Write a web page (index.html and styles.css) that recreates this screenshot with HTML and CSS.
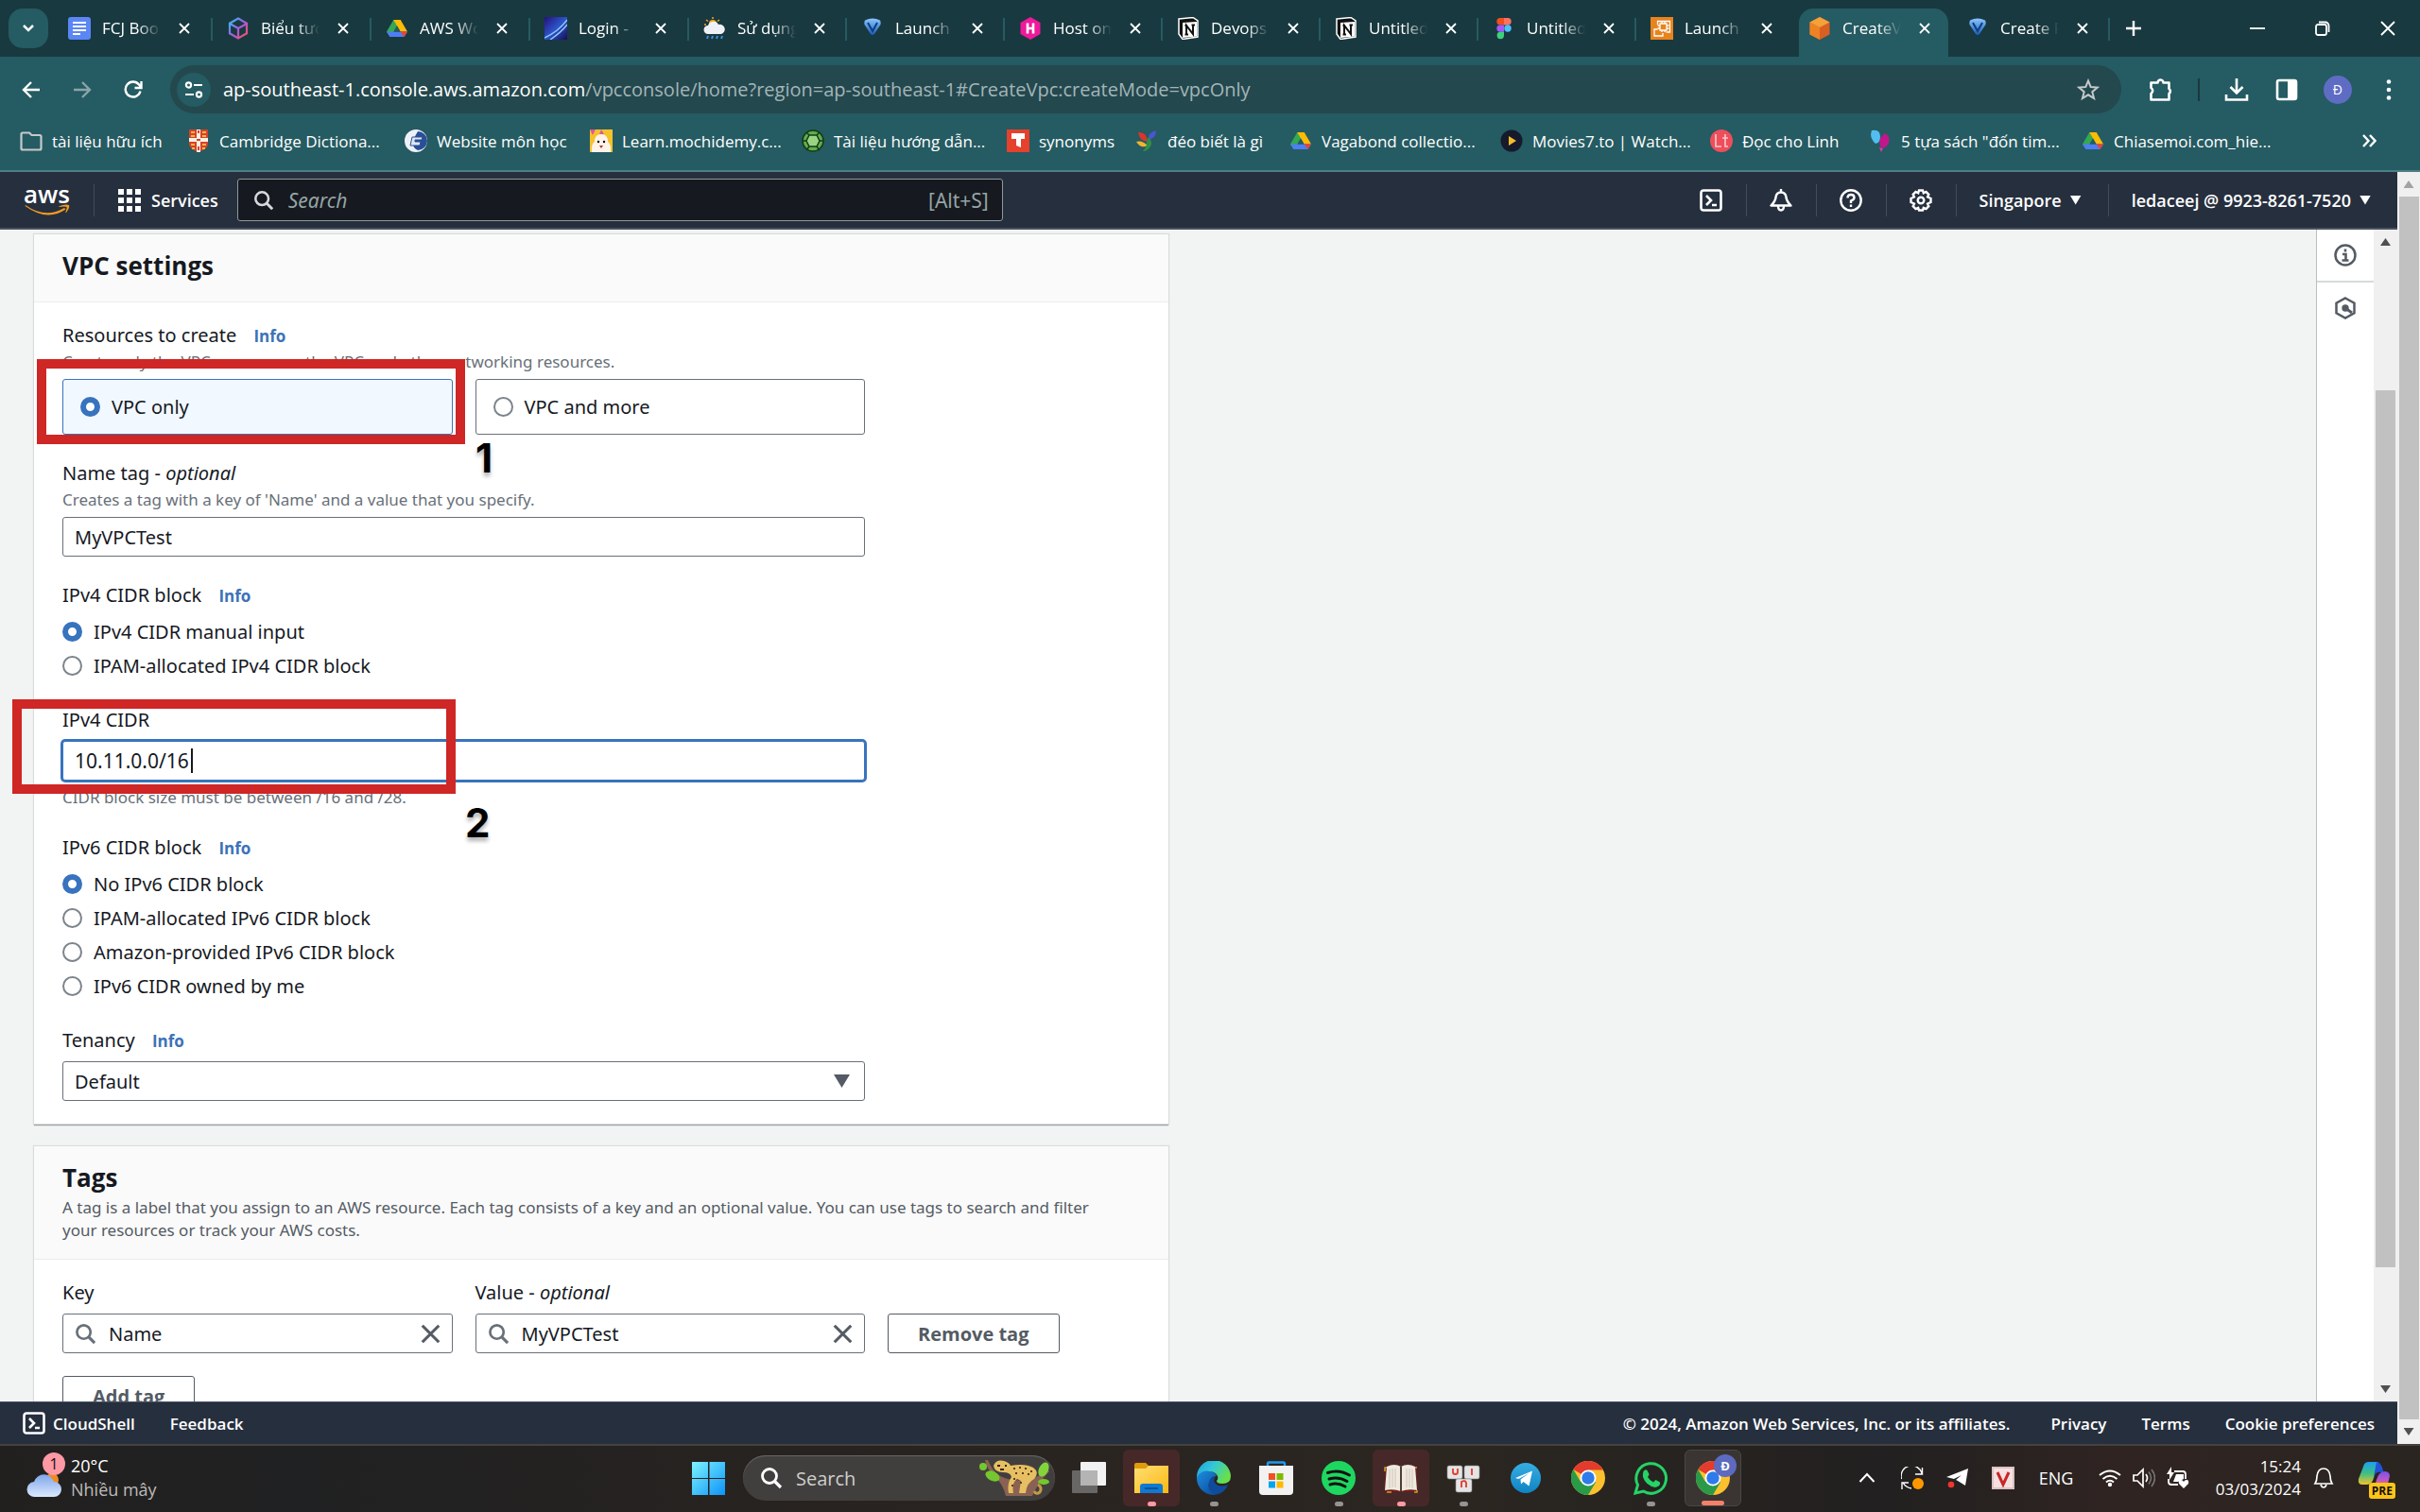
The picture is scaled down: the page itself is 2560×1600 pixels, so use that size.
FILE: index.html
```html
<!DOCTYPE html>
<html lang="en">
<head>
<meta charset="utf-8">
<title>CreateVpc | VPC Console</title>
<link rel="stylesheet" href="styles.css">
</head>
<body>
<svg class="defs" aria-hidden="true">
  <defs>
    <linearGradient id="g-hex" x1="0" y1="0" x2="1" y2="1"><stop offset="0" stop-color="#2fc3ee"/><stop offset=".5" stop-color="#a05be0"/><stop offset="1" stop-color="#ff4f5e"/></linearGradient>
    <linearGradient id="g-login" x1="0" y1="0" x2="1" y2="1"><stop offset="0" stop-color="#25107a"/><stop offset=".5" stop-color="#2c55c9"/><stop offset="1" stop-color="#160d55"/></linearGradient>
    <linearGradient id="g-v" x1="0" y1="0" x2="0" y2="1"><stop offset="0" stop-color="#8cc7ff"/><stop offset="1" stop-color="#1c5bb0"/></linearGradient>
    <linearGradient id="g-win" x1="0" y1="0" x2="1" y2="1"><stop offset="0" stop-color="#7df3ff"/><stop offset="1" stop-color="#0d93f7"/></linearGradient>
    <linearGradient id="g-cloud" x1="0" y1="0" x2="0" y2="1"><stop offset="0" stop-color="#7fa6ea"/><stop offset="1" stop-color="#dbe8ff"/></linearGradient>
    <linearGradient id="g-fold" x1="0" y1="0" x2="1" y2="1"><stop offset="0" stop-color="#ffdf74"/><stop offset="1" stop-color="#fcb813"/></linearGradient>
    <linearGradient id="g-edge" x1="0" y1="0" x2="1" y2=".5"><stop offset="0" stop-color="#1b9de2"/><stop offset=".5" stop-color="#35c8d6"/><stop offset="1" stop-color="#67e04a"/></linearGradient>
    <linearGradient id="g-edge2" x1="0" y1="0" x2="1" y2="1"><stop offset="0" stop-color="#1b8fe0"/><stop offset="1" stop-color="#0b3f8f"/></linearGradient>
    <linearGradient id="g-tg" x1="0" y1="0" x2="0" y2="1"><stop offset="0" stop-color="#37aee2"/><stop offset="1" stop-color="#0f83c4"/></linearGradient>
    <linearGradient id="g-co1" x1="0" y1="0" x2="0" y2="1"><stop offset="0" stop-color="#1aa0f5"/><stop offset=".5" stop-color="#3ebf83"/><stop offset="1" stop-color="#f5c12c"/></linearGradient>
    <linearGradient id="g-co2" x1="0" y1="0" x2="0" y2="1"><stop offset="0" stop-color="#7b4ff0"/><stop offset="1" stop-color="#f3659b"/></linearGradient>
  </defs>
  <symbol id="i-x" viewBox="0 0 12 12"><path d="M1 1l10 10M11 1L1 11" fill="none" stroke="currentColor" stroke-width="1.8"/></symbol>
  <symbol id="i-find" viewBox="0 0 24 24"><circle cx="10" cy="10" r="7.5" fill="none" stroke="currentColor" stroke-width="2.8"/><path d="M15 15l7 7" stroke="currentColor" stroke-width="3.2"/></symbol>
  <symbol id="i-drive" viewBox="0 0 24 24"><path d="M8.3 3h7.4L8 16.5 4.500 21 1 15.500z" fill="#34a853"/><path d="M8.300 3h7.400l7.300 12.500h-7.400z" fill="#fbbc04"/><path d="M5 15.500h18L19.500 21h-15L1 15.500z" fill="#4d7ef2"/><path d="M15.600 15.500H23L19.500 21z" fill="#ea4335"/><path d="M12 9.500l-3.500 6h7z" fill="#255b62"/></symbol>
  <symbol id="i-vee" viewBox="0 0 24 24"><path d="M4 3.500Q12-.500 20 3.500 21 5 20.500 8L14 18q-2 2-4 0L3.500 8Q3 5 4 3.500z" fill="url(#g-v)"/><path d="M7 6l5 9 5-9" fill="none" stroke="#0b3d86" stroke-width="2"/><path d="M8.500 20q3.500 2.500 7 0v2.500h-7z" fill="#123b52"/></symbol>
  <symbol id="i-notion" viewBox="0 0 24 24"><path d="M2 2l15-1.500L22 4v17L6 23.500 2 18z" fill="#111" stroke="#fff" stroke-width="1.500"/><path d="M6 6l15-1v15.500L6 22z" fill="#fff"/><path d="M10 18.500V9l7 9V8.500M8.500 9H11M15.500 8.500h3.500M8.500 18.500H12" fill="none" stroke="#111" stroke-width="2"/></symbol>
  <symbol id="i-shell" viewBox="0 0 24 24"><rect x="1.500" y="1.500" width="21" height="21" rx="2.500" fill="none" stroke="currentColor" stroke-width="2.600"/><path d="M7 7l5 5-5 5M13 17h5" fill="none" stroke="currentColor" stroke-width="2.600"/></symbol>
  <symbol id="i-chrome" viewBox="0 0 36 36"><circle cx="18" cy="18" r="18" fill="#fbc02d"/><path d="M18 18L2.400 9A18 18 0 0 1 33.600 9H18z" fill="#e33b2e"/><path d="M2.400 9A18 18 0 0 0 18 36l8-13.500L18 18l-8 4z" fill="#2a9a48"/><path d="M18 9H33.600" stroke="#e33b2e"/><circle cx="18" cy="18" r="8.500" fill="#fff"/><circle cx="18" cy="18" r="6.700" fill="#2f7bec"/></symbol>
</svg>

<div class="browser">
  <div class="tabstrip">
    <button class="tab-search" aria-label="Search tabs"><svg viewBox="0 0 14 14" width="14" height="14"><path d="M2 4l5 5 5-5" fill="none" stroke="currentColor" stroke-width="2.500"/></svg></button>
    <div class="tabs">
      <div class="tab"><svg class="fav" viewBox="0 0 24 24"><rect width="24" height="24" rx="3" fill="#5b86f5"/><path d="M5 6h14M5 10h14M5 14h14M5 18h8" stroke="#fff" stroke-width="2.200"/></svg><span>FCJ Boo</span><button aria-label="Close tab"><svg><use href="#i-x"/></svg></button></div>
      <div class="tab"><svg class="fav" viewBox="0 0 24 24"><path d="M12 1.500l9 5.200v10.600L12 22.500l-9-5.200V6.700zM3 7l9 5 9-5M12 12v10" fill="none" stroke="url(#g-hex)" stroke-width="2.200"/></svg><span>Biểu tượ</span><button aria-label="Close tab"><svg><use href="#i-x"/></svg></button></div>
      <div class="tab"><svg class="fav"><use href="#i-drive"/></svg><span>AWS Wo</span><button aria-label="Close tab"><svg><use href="#i-x"/></svg></button></div>
      <div class="tab"><svg class="fav" viewBox="0 0 24 24"><rect width="24" height="24" fill="url(#g-login)"/><path d="M0 22Q14 16 24 3M6 24Q18 16 24 8" fill="none" stroke="#8fc4ff" stroke-width="1.500"/></svg><span>Login - </span><button aria-label="Close tab"><svg><use href="#i-x"/></svg></button></div>
      <div class="tab"><svg class="fav" viewBox="0 0 24 24"><circle cx="10" cy="7" r="4" fill="#f9a825"/><path d="M10 0v2M3 3l2 1.500M17 3l-2 1.500M1 8h2" stroke="#f9a825" stroke-width="1.500"/><path d="M5 18a4.500 4.500 0 0 1 0-9 6 6 0 0 1 11-1 5 5 0 0 1 3 10z" fill="#eef1f5"/><path d="M5 20l-1 3M10 20l-1 3M15 20l-1 3M20 20l-1 3" stroke="#3d8fd8" stroke-width="2"/></svg><span>Sử dụng</span><button aria-label="Close tab"><svg><use href="#i-x"/></svg></button></div>
      <div class="tab"><svg class="fav"><use href="#i-vee"/></svg><span>Launch</span><button aria-label="Close tab"><svg><use href="#i-x"/></svg></button></div>
      <div class="tab"><svg class="fav" viewBox="0 0 24 24"><path d="M12 0l10.500 6v12L12 24 1.500 18V6z" fill="#ee1a9b"/><path d="M9 6.500v11M15 6.500v11M9 12h6" stroke="#fff" stroke-width="2.600"/></svg><span>Host on</span><button aria-label="Close tab"><svg><use href="#i-x"/></svg></button></div>
      <div class="tab"><svg class="fav"><use href="#i-notion"/></svg><span>Devops</span><button aria-label="Close tab"><svg><use href="#i-x"/></svg></button></div>
      <div class="tab"><svg class="fav"><use href="#i-notion"/></svg><span>Untitled</span><button aria-label="Close tab"><svg><use href="#i-x"/></svg></button></div>
      <div class="tab"><svg class="fav" viewBox="0 0 24 24"><path d="M12 1H8a3.700 3.700 0 0 0 0 7.400h4z" fill="#f24e1e"/><path d="M12 1h4a3.700 3.700 0 0 1 0 7.400h-4z" fill="#ff7262"/><path d="M12 8.400H8a3.700 3.700 0 0 0 0 7.400h4z" fill="#a259ff"/><circle cx="16" cy="12" r="3.700" fill="#4fc0fe"/><path d="M12 15.800H8a3.700 3.700 0 1 0 4 3.700z" fill="#3fd07a"/></svg><span>Untitled</span><button aria-label="Close tab"><svg><use href="#i-x"/></svg></button></div>
      <div class="tab before-active"><svg class="fav" viewBox="0 0 24 24"><rect width="24" height="24" fill="#e8831d"/><path d="M10 7h7v7h-7zM12 4.500V7M15 4.500V7M12 14v2M15 14v2M17 9h2.500M17 12h2.500M7.500 9H10M7.500 12H10M7.500 8V4.500h13V16h-4M7.500 13H4v7h9v-3" fill="none" stroke="#fff" stroke-width="1.300"/></svg><span>Launch</span><button aria-label="Close tab"><svg><use href="#i-x"/></svg></button></div>
      <div class="tab active"><svg class="fav" viewBox="0 0 24 24"><path d="M12 0l10.500 5.500v13L12 24 1.500 18.500v-13z" fill="#d95f22"/><path d="M12 0l10.500 5.500L12 11 1.500 5.500z" fill="#f5a13a"/><path d="M1.500 5.500L12 11v13L1.500 18.500z" fill="#ee8325"/></svg><span>CreateV</span><button aria-label="Close tab"><svg><use href="#i-x"/></svg></button></div>
      <div class="tab"><svg class="fav"><use href="#i-vee"/></svg><span>Create P</span><button aria-label="Close tab"><svg><use href="#i-x"/></svg></button></div>
      <button class="new-tab" aria-label="New tab"><svg viewBox="0 0 18 18" width="18" height="18"><path d="M9 1v16M1 9h16" stroke="currentColor" stroke-width="2.400"/></svg></button>
    </div>
    <div class="window-controls">
      <button aria-label="Minimize"><svg viewBox="0 0 16 16"><path d="M0 8h16" stroke="currentColor" stroke-width="1.800"/></svg></button>
      <button aria-label="Restore"><svg viewBox="0 0 16 16"><rect x="1" y="4" width="11" height="11" rx="2" fill="none" stroke="currentColor" stroke-width="1.800"/><path d="M4 1.500h7A3.500 3.500 0 0 1 14.500 5v7" fill="none" stroke="currentColor" stroke-width="1.800"/></svg></button>
      <button aria-label="Close window"><svg viewBox="0 0 16 16"><path d="M1 1l14 14M15 1L1 15" stroke="currentColor" stroke-width="1.800"/></svg></button>
    </div>
  </div>

  <div class="toolbar">
    <nav class="nav-buttons" aria-label="Navigation">
      <button aria-label="Back"><svg viewBox="0 0 20 20"><path d="M19 10H2M10 2l-8 8 8 8" fill="none" stroke="currentColor" stroke-width="2.400"/></svg></button>
      <button aria-label="Forward" disabled><svg viewBox="0 0 20 20"><path d="M1 10h17M10 2l8 8-8 8" fill="none" stroke="currentColor" stroke-width="2.400"/></svg></button>
      <button aria-label="Reload"><svg viewBox="0 0 20 20"><path d="M17.500 11.500A8 8 0 1 1 16 4.500L18 7M18.500 1v7h-7" fill="none" stroke="currentColor" stroke-width="2.400"/></svg></button>
    </nav>
    <div class="omnibox">
      <button class="site-info" aria-label="View site information"><svg viewBox="0 0 20 20" width="20" height="20"><circle cx="4.500" cy="5" r="2.600" fill="none" stroke="currentColor" stroke-width="2.200"/><path d="M10 5h9M1 15h9" stroke="currentColor" stroke-width="2.200"/><circle cx="15.500" cy="15" r="2.600" fill="none" stroke="currentColor" stroke-width="2.200"/></svg></button>
      <div class="url" role="textbox" aria-label="Address and search bar" tabindex="0"><b>ap-southeast-1.console.aws.amazon.com</b>/vpcconsole/home?region=ap-southeast-1#CreateVpc:createMode=vpcOnly</div>
      <button class="star" aria-label="Bookmark this tab"><svg viewBox="0 0 24 24" width="24" height="24"><path d="M12 2.500l2.700 6.600 7.100.500-5.500 4.600 1.800 6.900L12 17.300l-6.100 3.800 1.800-6.900L2.200 9.600l7.100-.500z" fill="none" stroke="currentColor" stroke-width="2"/></svg></button>
    </div>
    <div class="actions">
      <button aria-label="Extensions"><svg viewBox="0 0 26 26"><path d="M2.500 5.500h7a3 3 0 0 1 6 0h6v6.500a3 3 0 0 1 0 5v6.500h-19v-6.500a3.500 3.500 0 0 0 0-6z" fill="none" stroke="currentColor" stroke-width="2.600" stroke-linejoin="round"/></svg></button>
      <i class="rule"></i>
      <button aria-label="Downloads"><svg viewBox="0 0 26 26"><path d="M13 1v15M6.500 10l6.500 6.500L19.500 10M2 18v5.500h22V18" fill="none" stroke="currentColor" stroke-width="2.600"/></svg></button>
      <button aria-label="Side panel"><svg viewBox="0 0 26 26"><rect x="3" y="3" width="20" height="20" rx="2" fill="none" stroke="currentColor" stroke-width="2.600"/><path d="M14 3h8v20h-8z" fill="currentColor"/></svg></button>
      <button class="avatar" aria-label="Profile">Đ</button>
      <button aria-label="Menu"><svg viewBox="0 0 26 26"><circle cx="13" cy="4.500" r="2.300" fill="currentColor"/><circle cx="13" cy="13" r="2.300" fill="currentColor"/><circle cx="13" cy="21.500" r="2.300" fill="currentColor"/></svg></button>
    </div>
  </div>

  <nav class="bookmarks" aria-label="Bookmarks">
    <a href="#b1"><svg viewBox="0 0 24 24"><path d="M1.500 5V20q0 1.500 1.500 1.500h18q1.500 0 1.500-1.500V7.500Q22.500 6 21 6H12.500L10 3.500H3Q1.500 3.500 1.500 5z" fill="none" stroke="#c7c9cb" stroke-width="2.200"/></svg><span>tài liệu hữu ích</span></a>
    <a href="#b2"><svg viewBox="0 0 24 24"><path d="M2 0h20v15q0 6-10 9Q2 21 2 15z" fill="#d8412f"/><path d="M12 0v24M2 11h20" stroke="#f7f1e3" stroke-width="4"/><path d="M4 3h4M16 3h4M4 7h4M16 7h4M4 16h4M16 16h4M5 20h3M16 20h3" stroke="#f0b93c" stroke-width="2"/><path d="M12 1v3M12 18v4M10 11h4" stroke="#d8412f" stroke-width="2"/></svg><span>Cambridge Dictiona...</span></a>
    <a href="#b3"><svg viewBox="0 0 24 24"><circle cx="12" cy="12" r="12" fill="#eef1f7"/><path d="M14 2a10 10 0 0 1 0 20Q4 18 14 2z" fill="#2a4f97"/><path d="M8 8h11l-1 3h-7v2h6l-1 4H6z" fill="#dfe7f5" stroke="#2a4f97"/></svg><span>Website môn học</span></a>
    <a href="#b4"><svg viewBox="0 0 24 24"><rect width="24" height="24" fill="#f6c22c"/><path d="M2 24q-1-8 3-11 0-8 7-8t7 8q4 3 3 11z" fill="#fff3ea"/><path d="M0 0h6L3 6zM10 5l2-5 3 5z" fill="#e0559a"/><circle cx="9" cy="13" r="1.200"/><circle cx="15" cy="13" r="1.200"/><path d="M10 17h4l-2 3z" fill="#b5382a"/></svg><span>Learn.mochidemy.c...</span></a>
    <a href="#b5"><svg viewBox="0 0 24 24"><circle cx="12" cy="12" r="11" fill="#5cb04c" stroke="#173a17" stroke-width="1.500"/><path d="M8 6h8l3 6-3 6H8l-3-6z" fill="#9ad483" stroke="#173a17" stroke-width="1.500"/><path d="M8 6L5 3M16 6l3-3M19 12h4M16 18l3 4M8 18l-3 4M5 12H1" stroke="#173a17" stroke-width="1.500"/></svg><span>Tài liệu hướng dẫn...</span></a>
    <a href="#b6"><svg viewBox="0 0 24 24"><rect width="24" height="24" fill="#e5412c"/><path d="M5 4h14v6h-4v9l-5-2v-7H5z" fill="#fff"/></svg><span>synonyms</span></a>
    <a href="#b7"><svg viewBox="0 0 24 24"><path d="M3 3q9-1 10 10Q4 12 3 3z" fill="#d8352c"/><path d="M14 11Q13 3 22 1q0 8-8 10z" fill="#4b55cf"/><path d="M1 13q6-2 12 4-7 4-12-4z" fill="#f3b32d"/><path d="M14 8q5 6 2 10-3 5-8 5 5-5 4-11z" fill="#2f8f46"/></svg><span>đéo biết là gì</span></a>
    <a href="#b8"><svg><use href="#i-drive"/></svg><span>Vagabond collectio...</span></a>
    <a href="#b9"><svg viewBox="0 0 24 24"><circle cx="12" cy="12" r="11.500" fill="#151a2c"/><path d="M9 7l8 5-8 5z" fill="#f7bd2b"/></svg><span>Movies7.to | Watch...</span></a>
    <a href="#b10"><svg viewBox="0 0 24 24"><circle cx="12" cy="12" r="12" fill="#ee4e5b"/><path d="M6 5v13h6M16 5v13h3M13 9h6" fill="none" stroke="#f9c9cc" stroke-width="1.600"/></svg><span>Đọc cho Linh</span></a>
    <a href="#b11"><svg viewBox="0 0 24 24"><path d="M3 1q9-2 9 7 0 6-5 7Q0 9 3 1z" fill="#53bdf0"/><path d="M17 4q6 3 4 10-3 7-8 5-5-8 4-15z" fill="#c4168c"/><path d="M11 19l4 1-2 4z" fill="#e03ba8"/></svg><span>5 tựa sách "đốn tim...</span></a>
    <a href="#b12"><svg><use href="#i-drive"/></svg><span>Chiasemoi.com_hie...</span></a>
    <button aria-label="More bookmarks"><svg viewBox="0 0 16 16" width="16" height="16"><path d="M2 2l5.500 6L2 14M9 2l5.500 6L9 14" fill="none" stroke="currentColor" stroke-width="2.400"/></svg></button>
  </nav>
</div>

<div class="viewport">
  <div class="console">
    <header class="aws-bar">
      <a class="aws-logo" href="#home" aria-label="AWS home"><span>aws</span><svg viewBox="0 0 48 12" width="48" height="12"><path d="M1 1Q22 16 42 4l1.500 1.500Q24 19 .500 2z" fill="#f39a21"/><path d="M36 2.500Q43-.500 47 1q1 3-3 8-1 .500-.500-1 1.500-4 1-5-2-1-8 0z" fill="#f39a21"/></svg></a>
      <button class="services"><svg viewBox="0 0 24 24" width="24" height="24"><path d="M3 0v24M12 0v24M21 0v24" stroke="currentColor" stroke-width="6" stroke-dasharray="6 3"/></svg>Services</button>
      <label class="aws-search"><svg width="24" height="24"><use href="#i-find"/></svg><input type="search" placeholder="Search" aria-label="Search"><kbd>[Alt+S]</kbd></label>
      <div class="aws-right">
        <button class="ic" aria-label="CloudShell"><svg><use href="#i-shell"/></svg></button>
        <button class="ic" aria-label="Notifications"><svg viewBox="0 0 24 24"><path d="M1.500 17.500h21Q18 13 17.500 9 17 3.500 12 3.500T6.500 9Q6 13 1.500 17.500zM12 0v3M9 18q0 4.500 3 4.500t3-4.500" fill="none" stroke="currentColor" stroke-width="2.400" stroke-linejoin="round"/></svg></button>
        <button class="ic" aria-label="Support"><svg viewBox="0 0 24 24"><circle cx="12" cy="12" r="10.700" fill="none" stroke="currentColor" stroke-width="2.400"/><path d="M8.500 9.500Q8.500 6 12 6t3.500 3.200Q15.500 11 12 12.500V15M12 16.500V19" fill="none" stroke="currentColor" stroke-width="2.400"/></svg></button>
        <button class="ic" aria-label="Settings"><svg viewBox="0 0 24 24"><path d="M10 1.500h4l.800 2.800 2.700-1.300 2.800 2.800-1.200 2.700 3.400 1.500v4l-3.400 1.500 1.200 2.700-2.800 2.800-2.700-1.200-.800 2.700h-4l-.800-2.700-2.700 1.200-2.800-2.800 1.200-2.700L1.500 14v-4l3.400-1.500-1.200-2.700L6.500 3l2.700 1.300z" fill="none" stroke="currentColor" stroke-width="2.400"/><circle cx="12" cy="12" r="3.300" fill="none" stroke="currentColor" stroke-width="2.400"/></svg></button>
        <button class="menu">Singapore<i class="tri"></i></button>
        <button class="menu">ledaceej @ 9923-8261-7520<i class="tri"></i></button>
      </div>
    </header>

    <div class="middle">
      <main class="content">
        <form class="forms">
          <section class="card">
            <header><h2>VPC settings</h2></header>
            <div class="card-body">
              <fieldset class="field">
                <legend>Resources to create <a href="#info">Info</a></legend>
                <p>Create only the VPC resource or the VPC and other networking resources.</p>
                <div class="tiles">
                  <label class="tile chosen"><input type="radio" name="res" checked>VPC only</label>
                  <label class="tile"><input type="radio" name="res">VPC and more</label>
                  <div class="mark mark-1"></div>
                  <b class="step step-1">1</b>
                </div>
              </fieldset>
              <div class="field">
                <label for="nametag">Name tag - <em>optional</em></label>
                <p>Creates a tag with a key of 'Name' and a value that you specify.</p>
                <input class="text" id="nametag" type="text" value="MyVPCTest">
              </div>
              <fieldset class="field">
                <legend>IPv4 CIDR block <a href="#info">Info</a></legend>
                <div class="radios">
                  <label><input type="radio" name="v4" checked>IPv4 CIDR manual input</label>
                  <label><input type="radio" name="v4">IPAM-allocated IPv4 CIDR block</label>
                </div>
              </fieldset>
              <div class="field">
                <label for="cidr">IPv4 CIDR</label>
                <div class="anchor">
                  <input class="text focused" id="cidr" type="text" value="10.11.0.0/16">
                  <i class="caret"></i>
                  <div class="mark mark-2"></div>
                  <b class="step step-2">2</b>
                </div>
                <p class="hint">CIDR block size must be between /16 and /28.</p>
              </div>
              <fieldset class="field">
                <legend>IPv6 CIDR block <a href="#info">Info</a></legend>
                <div class="radios">
                  <label><input type="radio" name="v6" checked>No IPv6 CIDR block</label>
                  <label><input type="radio" name="v6">IPAM-allocated IPv6 CIDR block</label>
                  <label><input type="radio" name="v6">Amazon-provided IPv6 CIDR block</label>
                  <label><input type="radio" name="v6">IPv6 CIDR owned by me</label>
                </div>
              </fieldset>
              <div class="field">
                <div class="label-row"><label for="tenancy">Tenancy</label> <a href="#info">Info</a></div>
                <div class="anchor select"><select class="text" id="tenancy"><option>Default</option><option>Dedicated</option></select><i class="tri"></i></div>
              </div>
            </div>
          </section>

          <section class="card">
            <header><h2>Tags</h2><p>A tag is a label that you assign to an AWS resource. Each tag consists of a key and an optional value. You can use tags to search and filter your resources or track your AWS costs.</p></header>
            <div class="card-body">
              <div class="tag-row">
                <div class="field"><label for="key">Key</label>
                  <div class="text lookup"><svg class="find"><use href="#i-find"/></svg><input id="key" type="text" value="Name"><button type="button" aria-label="Clear key"><svg><use href="#i-x"/></svg></button></div></div>
                <div class="field"><label for="val">Value - <em>optional</em></label>
                  <div class="text lookup"><svg class="find"><use href="#i-find"/></svg><input id="val" type="text" value="MyVPCTest"><button type="button" aria-label="Clear value"><svg><use href="#i-x"/></svg></button></div></div>
                <button type="button" class="btn">Remove tag</button>
              </div>
              <button type="button" class="btn">Add tag</button>
            </div>
          </section>
        </form>
      </main>
      <aside class="tools">
        <button aria-label="Info panel"><svg viewBox="0 0 24 24"><circle cx="12" cy="12" r="10.500" fill="none" stroke="currentColor" stroke-width="2.500"/><path d="M12 5.500v3M9 11h3.500v6M8.500 17.500h7" fill="none" stroke="currentColor" stroke-width="2.600"/></svg></button>
        <button aria-label="Diagnose panel"><svg viewBox="0 0 24 24"><path d="M12 1.500l9.500 5.200v10.600L12 22.500l-9.500-5.200V6.700z" fill="none" stroke="currentColor" stroke-width="2.500"/><circle cx="12" cy="12" r="3.700" fill="currentColor"/><path d="M12 12l7 5" stroke="currentColor" stroke-width="3"/></svg></button>
      </aside>
      <div class="scroll inner" aria-hidden="true"><i class="up"></i><div class="track"><div class="thumb"></div></div><i class="down"></i></div>
    </div>

    <footer class="aws-foot">
      <button class="shell"><svg width="24" height="24"><use href="#i-shell"/></svg>CloudShell</button>
      <a href="#feedback">Feedback</a>
      <span class="copy">© 2024, Amazon Web Services, Inc. or its affiliates.</span>
      <a href="#privacy">Privacy</a><a href="#terms">Terms</a><a href="#cookies">Cookie preferences</a>
    </footer>
  </div>
  <div class="scroll outer" aria-hidden="true"><i class="up"></i><div class="track"><div class="thumb"></div></div><i class="down"></i></div>
</div>

<div class="taskbar">
  <button class="weather">
    <span class="weather-icon"><svg viewBox="0 0 38 30" width="38" height="30"><circle cx="27" cy="9" r="7" fill="#f08a24"/><path d="M9 27a8 8 0 0 1-1-16 11 11 0 0 1 21 0 8 8 0 0 1 0 16z" fill="url(#g-cloud)"/></svg><b>1</b></span>
    <span class="weather-text"><span>20°C</span><small>Nhiều mây</small></span>
  </button>
  <div class="apps">
    <button aria-label="Start"><svg viewBox="0 0 36 36"><path d="M0 1h17v17H0zM18.500 1H35v17H18.500zM0 19h17v17H0zM18.500 19H35v17H18.500z" fill="url(#g-win)"/></svg></button>
    <label class="task-search"><svg width="24" height="24"><use href="#i-find"/></svg><input type="search" placeholder="Search" aria-label="Search Windows"><svg class="cat" viewBox="0 0 76 38" width="76" height="38"><path d="M6 0q2 10 10 17 9 8 12 21h28q6-14 18-26l-2-3q-10 10-20 12-18 2-30-4Q14 12 9 0z" fill="#8a6253"/><circle cx="4" cy="7" r="4" fill="#74c72e"/><ellipse cx="14" cy="17" rx="8" ry="5" transform="rotate(25 14 17)" fill="#74c72e"/><ellipse cx="68" cy="10" rx="5" ry="8" transform="rotate(25 68 10)" fill="#82d63a"/><ellipse cx="68" cy="23" rx="6" ry="3" fill="#74c72e"/><path d="M15 6q3-7 11-5 6 2 7 5 15-3 24 2 7 5 1 12-8 4-9 15h-7l2-13-4-2q-6 4-4 15h-5q-2-10 3-17-1-5-9-5-9 0-10-7z" fill="#e6bf62"/><path d="M36 9h2M42 8h2M48 9h2M54 12h2M38 14h2M45 14h2M51 15h2M36 20h2M43 24h2M34 27h2" stroke="#5f3d1c" stroke-width="2"/><path d="M19 6h3M27 6h2M22 10h4" stroke="#3a2416" stroke-width="2"/><path d="M62 26q5 3 2 8-4 3-6-1" fill="none" stroke="#c59a46" stroke-width="3"/></svg></label>
    <button aria-label="Task view"><svg viewBox="0 0 36 36"><rect x="9" y="1" width="27" height="25" rx="1" fill="#f2f2f2"/><rect y="10" width="27" height="24" rx="1" fill="#737373" fill-opacity=".850"/><path d="M9 10h18v16H9z" fill="#b4b4b4"/></svg></button>
    <button class="hot dot" aria-label="File Explorer"><svg viewBox="0 0 36 36"><path d="M0 4q0-2 2-2h10l4 4v6H0z" fill="#e09b0a"/><path d="M0 8h12l3-3h21v29H0z" fill="url(#g-fold)"/><path d="M6 34V27q0-3 3-3h18q3 0 3 3v7z" fill="#1079d2"/><path d="M11 29h14" stroke="#07549c" stroke-width="2"/></svg></button>
    <button class="dot" aria-label="Edge"><svg viewBox="0 0 36 36"><path d="M0 18A18 18 0 0 1 36 16q0 8-9 8-6 0-6-3 2-2 1-5-3-6-10-4-8 2-12 6z" fill="url(#g-edge)"/><path d="M0 17Q5 9 14 11q6 1 7 5-9 1-6 9 4 8 13 7-5 4-11 4A18 18 0 0 1 0 17z" fill="url(#g-edge2)"/><path d="M20 16q-4 5 1 9 5 3 12 0-3 8-11 10-9-1-10-9 1-8 8-10z" fill="#0f4b9a"/></svg></button>
    <button aria-label="Microsoft Store"><svg viewBox="0 0 36 36"><path d="M9 7V3q0-1.500 1.500-1.500h15Q27 1.500 27 3v4" fill="none" stroke="#1d9bf0" stroke-width="2.400"/><path d="M0 5h36v27q0 4-4 4H4q-4 0-4-4z" fill="#f2f2f2"/><path d="M10 13h7v7h-7z" fill="#f25022"/><path d="M18.500 13h7v7h-7z" fill="#7fba00"/><path d="M10 21.500h7v7h-7z" fill="#00a4ef"/><path d="M18.500 21.500h7v7h-7z" fill="#ffb900"/></svg></button>
    <button class="dot" aria-label="Spotify"><svg viewBox="0 0 36 36"><circle cx="18" cy="18" r="18" fill="#1ed760"/><path d="M6.500 12.500q12-4 23 2.500M8 19q10-3 19 2.500M9 25q8-2.500 16 2" fill="none" stroke="#111" stroke-width="3" stroke-linecap="round"/></svg></button>
    <button class="hot dot" aria-label="Reader"><svg viewBox="0 0 36 36"><path d="M1 7h34v26H1z" fill="#6a1f18" stroke="#d99a2c" stroke-width="1.500" stroke-dasharray="5 24"/><path d="M3 6q8-4 15 0 7-4 15 0l2 25q-9-2-17 1-8-3-17-1z" fill="#efe9df"/><path d="M18 6v26" stroke="#4a4038" stroke-width="2"/><path d="M6 9v20M9 8v20M12 8v20M24 8v20M27 8v20M30 9v20" stroke="#cfc6ba"/></svg></button>
    <button class="dot" aria-label="UniKey"><svg viewBox="0 0 36 36"><g fill="#e4e4e4" stroke="#8b8b8b" stroke-width=".600"><rect x="1" y="5" width="16" height="14" rx="2"/><rect x="19" y="5" width="16" height="14" rx="2"/><rect x="10" y="19" width="17" height="14" rx="2"/></g><path d="M7 8v4q0 2 2.500 2T12 12V8M27 8v7M16 28v-6q4-2 5 1v5" fill="none" stroke="#e23a2e" stroke-width="1.800"/></svg></button>
    <button aria-label="Telegram"><svg viewBox="0 0 36 36"><circle cx="18" cy="18" r="16" fill="url(#g-tg)"/><path d="M7 18L25 10.500l-3.500 16-6-4.500-2.500 2.500-.500-5 9-6.500-11 6z" fill="#fff"/></svg></button>
    <button aria-label="Chrome"><svg><use href="#i-chrome"/></svg></button>
    <button class="dot" aria-label="WhatsApp"><svg viewBox="0 0 36 36"><path d="M2 34l2.500-8.500A15.800 15.800 0 1 1 10.500 32z" fill="none" stroke="#25d366" stroke-width="3"/><path d="M10.500 11q2-3 4-1l2 4q0 1-1.500 3 2.500 4 6 5.500l2.500-2.500 4.500 2.500q1 4-5 5.500Q13 26 10 17q-.500-3 .500-6z" fill="#25d366"/></svg></button>
    <button class="current dot" aria-label="Chrome, profile"><svg><use href="#i-chrome"/></svg><b>Đ</b></button>
  </div>
  <div class="tray">
    <button aria-label="Hidden icons"><svg viewBox="0 0 24 24"><path d="M4.500 16L12 8l7.500 8" fill="none" stroke="currentColor" stroke-width="2"/></svg></button>
    <button aria-label="Update"><svg viewBox="0 0 24 24"><path d="M.500 13A11 11 0 0 1 22 7M22.500 1v7H15M11 23Q5 22 2 17M1 24v-7h7" fill="none" stroke="currentColor" stroke-width="1.400"/><circle cx="18" cy="18" r="6" fill="#ff9800"/></svg></button>
    <button aria-label="Telegram"><svg viewBox="0 0 24 24"><path d="M0 11L23 2l-3 18-8-5-2-1 6-5-8 4z" fill="#fff"/><circle cx="5" cy="19" r="3.300" fill="#f0372e"/></svg></button>
    <button aria-label="UniKey"><svg viewBox="0 0 24 24"><rect width="24" height="24" fill="#d9c3c3"/><rect x="2" y="2" width="20" height="20" fill="#f7e0e0"/><path d="M6 6l6 13 6-13" fill="none" stroke="#c62828" stroke-width="3"/></svg></button>
    <button class="lang">ENG</button>
    <button class="status" aria-label="Network, sound, battery">
      <svg viewBox="0 0 24 24"><path d="M1 9q11-9 22 0M4.500 13q7.500-6.500 15 0M8 16.500q4-3.500 8 0" fill="none" stroke="currentColor" stroke-width="2"/><circle cx="12" cy="19" r="2.200" fill="currentColor"/></svg>
      <svg viewBox="0 0 24 24"><path d="M1 9h4l6-6v18l-6-6H1zM14 8q3 4 0 8" fill="none" stroke="currentColor" stroke-width="1.700"/><path d="M17 5.500q5 6.500 0 13M20 3q7 9 0 18" fill="none" stroke="#777" stroke-width="1.500"/></svg>
      <svg viewBox="0 0 24 24"><path d="M8 5h9q3 0 3 3v5M2 13v3q0 3 3 3h7" fill="none" stroke="currentColor" stroke-width="1.800"/><path d="M5 0L0 8h3v6l5-8H5zM7 16l3-8h8v5l-6 3z" fill="currentColor"/><path d="M18 23l-5-5q-1-4 2-4 2 0 3 2 1-2 3-2 3 0 2 4z" fill="currentColor"/></svg>
    </button>
    <button class="clock"><span>15:24</span><span>03/03/2024</span></button>
    <button aria-label="Notifications"><svg viewBox="0 0 24 24"><path d="M3 18q2-3 2-8 1-8 7-8t7 8q0 5 2 8zM9 19q1 3 3 3t3-3" fill="none" stroke="currentColor" stroke-width="1.700"/></svg></button>
    <button class="copilot" aria-label="Copilot"><svg viewBox="0 0 36 36"><path d="M6 6q1-5 6-5h10l-5 17q-2 7-7 7H5q-5 0-4-6z" fill="url(#g-co1)"/><path d="M20 1q4 0 6 6l2 6q-8-4-11 4z" fill="#2153d8"/><path d="M28 11q6 0 6 5l-3 12H16q2-1 4-8 2-8 8-9z" fill="url(#g-co2)"/></svg><b>PRE</b></button>
  </div>
</div>
</body>
</html>
```
FILE: styles.css
```css
* { box-sizing: border-box; }

html, body { height: 100%; }

body {
  margin: 0;
  display: flex;
  flex-direction: column;
  overflow: hidden;
  font-family: "Open Sans", "Noto Sans", sans-serif;
  font-size: 20px;
  color: #16191f;
}

button, input, select {
  font: inherit;
  color: inherit;
  margin: 0;
  padding: 0;
  border: 0;
  background: none;
  outline: 0;
}

button {
  display: inline-flex;
  align-items: center;
  justify-content: center;
}

svg { display: block; flex: none; }
a { color: inherit; text-decoration: none; }
i { flex: none; }
.defs { position: absolute; width: 0; height: 0; }

/* Browser frame */
.browser {
  flex: none;
  color: #fff;
  background: #255b62;
  border-bottom: 2px solid #4d7f84;
  font-size: 17px;
}

.tabstrip {
  display: flex;
  height: 60px;
  background: #18393f;
}

.tab-search {
  width: 42px;
  height: 42px;
  margin: 9px 6px 0 9px;
  border-radius: 15px;
  background: #255b62;
}

.tabs { display: flex; flex: 1; }

.tab {
  position: relative;
  display: flex;
  align-items: center;
  width: 167px;
  padding: 0 0 0 15px;
}

.tab:nth-child(-n + 4) { width: 168px; }

.tab::after {
  content: "";
  position: absolute;
  right: 0;
  top: 19px;
  width: 2px;
  height: 24px;
  background: #255b62;
}

.tab.active::after, .before-active::after { display: none; }

.tab.active::before {
  content: "";
  position: absolute;
  z-index: 0;
  left: 5px;
  right: 4px;
  top: 9px;
  bottom: 0;
  border-radius: 15px 15px 0 0;
  background: #255b62;
}

.tab > * { position: relative; }
.fav { width: 24px; height: 24px; margin-right: 12px; }

.tab span {
  width: 62px;
  overflow: hidden;
  white-space: nowrap;
  line-height: 26px;
  -webkit-mask-image: linear-gradient(90deg, #000 60%, transparent);
  mask-image: linear-gradient(90deg, #000 60%, transparent);
}

.tab button { width: 24px; height: 24px; margin-left: 13px; }
.tab button svg { width: 12px; height: 12px; }
.new-tab { width: 50px; }

.window-controls { display: flex; }
.window-controls button { width: 69px; }
.window-controls svg { width: 16px; height: 16px; }

.toolbar {
  display: flex;
  align-items: center;
  height: 69px;
}

.nav-buttons { display: flex; width: 180px; padding-left: 6px; }
.nav-buttons button { width: 54px; }
.nav-buttons svg { width: 20px; height: 20px; }
.nav-buttons button:disabled { color: #8aa4a8; }

.omnibox {
  flex: 1;
  display: flex;
  align-items: center;
  height: 51px;
  padding: 0 23px 0 7px;
  border-radius: 26px;
  background: #23484e;
}

.site-info {
  width: 36px;
  height: 36px;
  margin-right: 13px;
  border-radius: 18px;
  background: #255b62;
}

.url { flex: 1; font-size: 20px; color: #a3b5b8; white-space: nowrap; }
.url b { font-weight: 400; color: #fff; }
.star { color: #c3c9ca; }

.actions {
  display: flex;
  align-items: center;
  justify-content: space-between;
  width: 316px;
  padding: 0 20px 0 29px;
}

.actions svg { width: 26px; height: 26px; }
.rule { width: 2px; height: 24px; background: #18393f; }

.avatar {
  width: 30px;
  height: 30px;
  border-radius: 50%;
  background: #5f6cc4;
  font-size: 14px;
}

.bookmarks {
  display: grid;
  grid-template-columns: 177px 230px 196px 224px 217px 136px 163px 223px 222px 168px 225px 1fr 60px;
  height: 51px;
  padding: 0 24px 11px 21px;
  align-items: center;
}

.bookmarks a { display: flex; align-items: center; gap: 10px; white-space: nowrap; }
.bookmarks svg { width: 24px; height: 24px; }
.bookmarks button svg { width: 16px; height: 16px; }

/* Console */
.viewport { flex: 1; display: flex; min-height: 0; }

.console {
  flex: 1;
  min-width: 0;
  display: flex;
  flex-direction: column;
}

.aws-bar {
  flex: none;
  display: flex;
  align-items: center;
  height: 61px;
  color: #fff;
  background: #262f3e;
  border-bottom: 2px solid #4b5362;
  font-size: 18px;
  font-weight: 600;
}

.aws-logo {
  display: flex;
  flex-direction: column;
  align-items: center;
  width: 99px;
}

.aws-logo span { font-size: 26px; line-height: 20px; font-weight: 600; }
.aws-logo svg { margin-top: 1px; }

.services {
  gap: 11px;
  height: 34px;
  padding: 0 20px 0 25px;
  border-left: 1px solid #414d5c;
}

.aws-search {
  display: flex;
  align-items: center;
  width: 810px;
  height: 45px;
  padding: 0 14px 0 16px;
  border: 1px solid #8d9a9b;
  border-radius: 3px;
  background: #16191f;
  font-family: "Noto Sans", sans-serif;
  font-size: 21px;
  font-weight: 400;
  color: #d5dbdb;
}

.aws-search svg { width: 22px; height: 22px; margin-right: 15px; }
.aws-search input { flex: 1; }
.aws-search input::placeholder { color: #95a5a6; opacity: 1; font-style: italic; }
.aws-search kbd { font: inherit; color: #95a5a6; }

.aws-right { display: flex; align-items: center; margin-left: auto; }
.aws-right button { height: 34px; border-left: 1px solid #414d5c; }
.aws-right .ic { width: 74px; }
.aws-right .ic:first-child { border-left: 0; }
.aws-right .ic svg { width: 24px; height: 24px; }
.aws-right .menu { padding: 0 28px 0 24px; gap: 9px; }

.tri {
  width: 12px;
  height: 10px;
  background: currentColor;
  clip-path: polygon(0 0, 100% 0, 50% 100%);
}

.middle { flex: 1; display: flex; min-height: 0; }

.content {
  flex: 1;
  min-width: 0;
  padding: 5px 36px 0;
  overflow: hidden;
  background: #f2f3f3;
}

.forms { display: grid; gap: 24px; max-width: 1200px; font-family: "Noto Sans", sans-serif; }

.card {
  background: #fff;
  box-shadow: 0 0 1px 1px #d8dcdd, 0 2px 1px #8f9999;
}

.card > header {
  padding: 17px 48px 18px 30px;
  background: #fafafa;
  border-bottom: 1px solid #eaeded;
}

h2 { margin: 0 0 3px; font-family: "Open Sans", sans-serif; font-size: 26px; line-height: 33px; font-weight: 700; }
p { margin: 0; font-size: 17px; line-height: 24px; color: #687078; }
.card > header p { color: #545b64; }

.card-body { display: grid; gap: 24px; padding: 18px 30px 24px; }

.field { border: 0; margin: 0; padding: 0; min-width: 0; line-height: 33px; }
.card-body > .field { width: calc(75% - 6px); }
.field > label { display: block; height: 33px; }
legend, .label-row { height: 33px; padding: 0; }

.field a {
  margin-left: 13px;
  font-family: "Open Sans", sans-serif;
  font-size: 17px;
  line-height: 20px;
  font-weight: 700;
  color: #3d72b8;
}

.hint { margin-top: 6px; }

.tiles {
  position: relative;
  display: grid;
  grid-template-columns: 1fr 1fr;
  gap: 24px;
  margin-top: 6px;
}

.tile {
  display: flex;
  align-items: center;
  height: 59px;
  padding-left: 18px;
  border: 1px solid #687078;
  border-radius: 3px;
}

.tile.chosen { border-color: #3873bd; background: #f1f8ff; }

input[type="radio"] {
  appearance: none;
  flex: none;
  width: 21px;
  height: 21px;
  margin-right: 12px;
  border: 2px solid #7d848b;
  border-radius: 50%;
  background: #fff;
}

input[type="radio"]:checked { border: 6px solid #3873bd; }

.radios { display: grid; gap: 3px; margin-top: 6px; }
.radios label { display: flex; align-items: center; }

.text {
  display: block;
  width: 100%;
  height: 42px;
  margin-top: 6px;
  padding: 0 12px;
  border: 1px solid #687078;
  border-radius: 3px;
  background: #fff;
}

.text.focused { border-color: #3873bd; box-shadow: 0 0 0 2px #3873bd; font-size: 21px; }
.anchor { position: relative; }
select { appearance: none; }

.select .tri {
  position: absolute;
  right: 16px;
  top: 14px;
  width: 17px;
  height: 14px;
  color: #545b64;
}

.caret {
  position: absolute;
  left: 136px;
  top: 8px;
  width: 2px;
  height: 26px;
  background: #16191f;
}

/* Walk-through highlights drawn over the form */
.mark { position: absolute; border: 10px solid #cf2626; }
.mark-1 { left: -27px; top: -21px; width: 453px; height: 90px; }
.mark-2 { left: -53px; top: -44px; width: 469px; height: 100px; }

.step {
  position: absolute;
  font: 700 42px/43px Inter, sans-serif;
  color: #000;
  text-shadow: 0 4px 4px rgba(0, 0, 0, .3);
}

.step-1 { left: 437px; top: 62px; }
.step-2 { left: 426px; top: 65px; }

.tag-row {
  display: grid;
  grid-template-columns: calc(37.5% - 15px) calc(37.5% - 15px) auto;
  gap: 24px;
  align-items: end;
  justify-content: start;
}

.lookup { display: flex; align-items: center; }
.lookup input { flex: 1; min-width: 0; }
.lookup .find { width: 23px; height: 23px; margin-right: 13px; color: #687078; }
.lookup button svg { width: 21px; height: 21px; color: #545b64; }

.btn {
  justify-self: start;
  height: 42px;
  padding: 0 31px;
  border: 1px solid #545b64;
  border-radius: 3px;
  background: #fff;
  font-family: "Open Sans", sans-serif;
  font-weight: 700;
  color: #545b64;
}

.tools {
  flex: none;
  width: 61px;
  border-left: 1px solid #b9bfc0;
  background: #fff;
  color: #545b64;
}

.tools button { width: 100%; height: 56px; border-bottom: 2px solid #d5dbdb; }
.tools button + button { height: 54px; border-bottom: 0; }
.tools svg { width: 24px; height: 24px; }

.scroll {
  flex: none;
  display: flex;
  flex-direction: column;
  align-items: center;
  width: 25px;
  background: #f0f0f0;
}

.outer { width: 24px; }
.scroll i { width: 11px; height: 8px; margin: 9px 0; background: #505050; }
.scroll .up { clip-path: polygon(50% 0, 100% 100%, 0 100%); }
.scroll .down { clip-path: polygon(0 0, 100% 0, 50% 100%); }
.outer .up { background: #a3a3a3; }
.track { flex: 1; width: 21px; }
.thumb { height: 100%; background: #c1c1c1; }
.inner .track { padding: 144px 0 116px; }

.aws-foot {
  flex: none;
  display: flex;
  align-items: center;
  gap: 37px;
  height: 45px;
  padding: 0 24px;
  color: #fff;
  background: #262f3e;
  border-top: 1px solid #4b5362;
  font-size: 17px;
  font-weight: 600;
}

.shell { gap: 8px; }
.copy { margin-left: auto; margin-right: 6px; }

/* Taskbar */
.taskbar {
  flex: none;
  display: grid;
  grid-template-columns: 1fr auto 1fr;
  height: 72px;
  padding-bottom: 2px;
  border-top: 2px solid #45423f;
  background: linear-gradient(90deg, #22201f, #202122 12%, #282320 35%, #2b2620 60%, #222020 78%, #302422 88%, #2a2520);
  color: #fff;
  font-size: 18px;
}

.weather { justify-self: start; padding-left: 28px; gap: 9px; }
.weather-icon { position: relative; padding-top: 16px; }

.weather-icon b {
  position: absolute;
  right: -3px;
  top: -4px;
  width: 24px;
  height: 24px;
  border-radius: 50%;
  background: #ff99a4;
  color: #111;
  font-size: 16px;
  line-height: 24px;
  font-weight: 400;
}

.weather-text { display: grid; text-align: left; line-height: 25px; }
.weather-text small { font-size: 18px; color: #bdbbba; }

.apps { display: flex; align-items: center; gap: 6px; padding-left: 2px; }

.apps button {
  position: relative;
  width: 60px;
  height: 60px;
  border-radius: 6px;
}

.apps button svg { width: 36px; height: 36px; }
.apps .hot { background: #472829; }

.apps .dot::after {
  content: "";
  position: absolute;
  left: 26px;
  bottom: 0;
  width: 9px;
  height: 5px;
  border-radius: 3px;
  background: #969492;
}

.apps .hot::after { background: #ff99a4; }
.apps .current { background: #3a3532; border: 1px solid #4a4643; }
.apps .current::after { left: 17px; width: 24px; background: #f7806a; }

.current b {
  position: absolute;
  right: 4px;
  top: 4px;
  width: 24px;
  height: 24px;
  border-radius: 50%;
  background: #5c6bc0;
  font-size: 13px;
  line-height: 24px;
}

.task-search {
  display: flex;
  align-items: center;
  width: 330px;
  height: 48px;
  padding: 0 4px 0 18px;
  border-radius: 24px;
  background: #413f3e;
  box-shadow: inset 0 1px 1px #6a6866;
}

.task-search input { flex: 1; min-width: 0; margin-left: 14px; font-size: 20px; }
.task-search input::placeholder { color: #d0cecd; opacity: 1; }

.tray {
  display: flex;
  align-items: center;
  justify-self: end;
  padding-right: 24px;
}

.tray button { width: 48px; height: 48px; }
.tray svg { width: 24px; height: 24px; }
.tray .lang { width: 64px; font-size: 18px; }
.tray .status { width: 122px; gap: 12px; }

.tray .clock {
  width: 105px;
  flex-direction: column;
  align-items: flex-end;
  font-size: 17px;
  line-height: 24px;
}

.tray .copilot { position: relative; width: 48px; margin-left: 6px; }
.tray .copilot svg { width: 36px; height: 36px; }

.copilot b {
  position: absolute;
  right: 2px;
  bottom: 2px;
  padding: 0 3px;
  border-radius: 3px;
  background: #fcc419;
  color: #111;
  font-size: 12px;
  line-height: 17px;
}
```
